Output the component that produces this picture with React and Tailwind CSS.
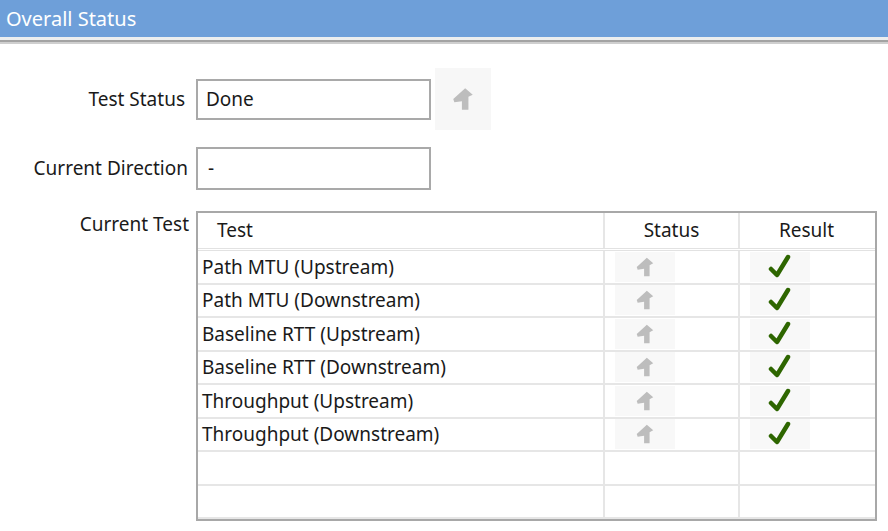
import React from "react";

const Arrow = ({ size = 24 }) => (
  <svg width={size} height={size} viewBox="0 0 24 24">
    <polygon points="14,2 21,8 17,10 17,22 11,22 11,14 4,15 3,12" fill="#bdbdbd" />
  </svg>
);

const Check = () => (
  <svg width="26" height="26" viewBox="0 0 26 26">
    <path d="M4 15 L10 21 L21 3" fill="none" stroke="#2e6600" strokeWidth="4.5" strokeLinejoin="round" strokeLinecap="round" />
  </svg>
);

const rows = [
  "Path MTU (Upstream)",
  "Path MTU (Downstream)",
  "Baseline RTT (Upstream)",
  "Baseline RTT (Downstream)",
  "Throughput (Upstream)",
  "Throughput (Downstream)",
];

export default function App() {
  return (
    <div className="w-[888px] h-[531px] bg-white overflow-hidden" style={{ fontFamily: "Tahoma, 'Noto Sans', 'DejaVu Sans', sans-serif" }}>
      <div className="h-[37px] bg-[#6e9fd9] flex items-center pl-[6px] text-white text-[20px] leading-none">Overall Status</div>
      <div className="h-[3px] bg-[#eceeef]"></div>
      <div className="h-[2px] bg-[#a3a3a3]"></div>
      <div className="h-[2px] bg-[#cfcfcf]"></div>

      <div className="flex items-center mt-[24px]">
        <div className="w-[186px] text-right text-[19px] text-[#1a1a1a] pr-[1px]">Test Status</div>
        <div className="ml-[10px] w-[235px] h-[41px] border-2 border-[#a9a9a9] flex items-center pl-[8px] text-[19px] text-[#1a1a1a]">Done</div>
        <div className="ml-[4px] w-[56px] h-[62px] bg-[#f7f7f7] flex items-center justify-center">
          <Arrow size={26} />
        </div>
      </div>

      <div className="flex items-center mt-[17px]">
        <div className="w-[188px] text-right text-[19px] text-[#1a1a1a]">Current Direction</div>
        <div className="ml-[8px] w-[235px] h-[43px] border-2 border-[#a9a9a9] flex items-center pl-[10px] text-[19px] text-[#1a1a1a]">-</div>
      </div>

      <div className="flex items-start mt-[21px]">
        <div className="w-[189px] text-right text-[19px] text-[#1a1a1a] leading-[26px]">Current Test</div>
        <div className="ml-[7px] w-[681px] h-[310px] border-2 border-[#a8a8a8] text-[19px] text-[#1a1a1a]">
          <div className="flex h-[38px] border-b-[3px] border-double border-[#e2e2e2]">
            <div className="w-[407px] pl-[19px] flex items-center border-r-2 border-[#e6e6e6]">Test</div>
            <div className="w-[135px] flex items-center justify-center border-r-2 border-[#e6e6e6]">Status</div>
            <div className="w-[133px] flex items-center justify-center">Result</div>
          </div>
          {rows.map((r) => (
            <div key={r} className="flex h-[33.5px] border-b-2 border-[#e6e6e6]">
              <div className="w-[407px] pl-[4px] flex items-center border-r-2 border-[#e6e6e6]">{r}</div>
              <div className="w-[135px] flex items-center pl-[10px] border-r-2 border-[#e6e6e6]">
                <div className="w-[60px] h-[30px] bg-[#f8f8f8] flex items-center justify-center"><Arrow size={22} /></div>
              </div>
              <div className="w-[133px] flex items-center pl-[10px]">
                <div className="w-[60px] h-[30px] bg-[#f8f8f8] flex items-center justify-center"><Check /></div>
              </div>
            </div>
          ))}
          {[0, 1].map((i) => (
            <div key={i} className="flex h-[33.5px] border-b-2 border-[#e6e6e6]">
              <div className="w-[407px] border-r-2 border-[#e6e6e6]"></div>
              <div className="w-[135px] border-r-2 border-[#e6e6e6]"></div>
              <div className="w-[133px]"></div>
            </div>
          ))}
        </div>
      </div>
    </div>
  );
}
